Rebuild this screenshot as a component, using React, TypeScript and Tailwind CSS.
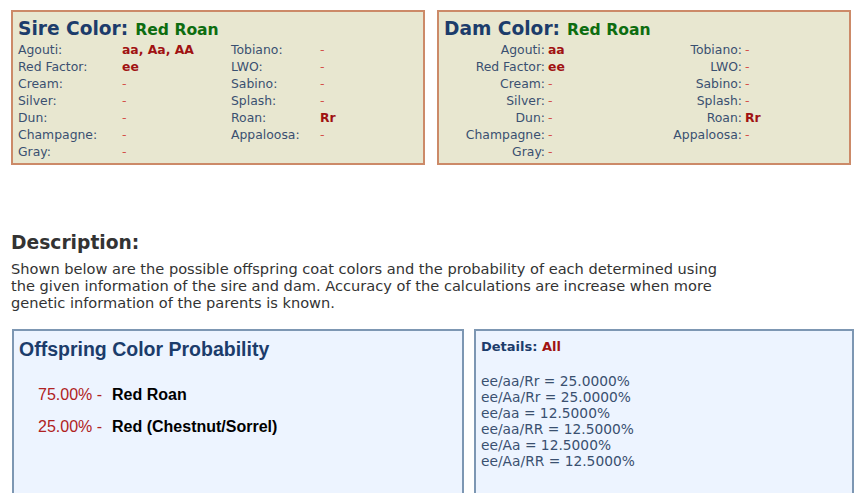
import React from 'react';

const VERDANA = "font-['DejaVu_Sans',Verdana,sans-serif]";
const ARIAL = "font-['Liberation_Sans',Arial,sans-serif]";

type Gene = [string, string];

const left: Gene[] = [
  ['Agouti:', 'aa, Aa, AA'],
  ['Red Factor:', 'ee'],
  ['Cream:', '-'],
  ['Silver:', '-'],
  ['Dun:', '-'],
  ['Champagne:', '-'],
  ['Gray:', '-'],
];
const right: Gene[] = [
  ['Tobiano:', '-'],
  ['LWO:', '-'],
  ['Sabino:', '-'],
  ['Splash:', '-'],
  ['Roan:', 'Rr'],
  ['Appaloosa:', '-'],
];
const damLeft: Gene[] = left.map(([k, v]) => [k, k === 'Agouti:' ? 'aa' : v]);

function Value({ v }: { v: string }) {
  if (v === '-') return <span className="text-[#d4504a]">-</span>;
  return <span className="font-bold text-[#a01212]">{v}</span>;
}

function ParentBox({ title, genes, alignRight }: { title: string; genes: Gene[]; alignRight?: boolean }) {
  const rows = genes.map((g, i) => [g, right[i]] as const);
  return (
    <div className={`w-[414px] h-[155px] border-2 border-[#cc8a68] bg-[#e8e7d0] px-[5px] pt-[6px] ${VERDANA}`}>
      <div className="flex items-baseline gap-[7px] leading-[22px]">
        <span className="text-[18.6px] font-bold text-[#1c3c6b]">{title}</span>
        <span className="text-[15.6px] font-bold text-[#0d6d10]">Red Roan</span>
      </div>
      <div className="text-[12.4px] leading-[17px] text-[#3a5070]">
        {rows.map(([a, b], i) =>
          alignRight ? (
            <div key={i} className="flex">
              <div className="w-[101px] text-right">{a[0]}</div>
              <div className="w-[96px] pl-[3px]"><Value v={a[1]} /></div>
              <div className="w-[101px] text-right">{b ? b[0] : ''}</div>
              <div className="pl-[3px]">{b ? <Value v={b[1]} /> : null}</div>
            </div>
          ) : (
            <div key={i} className="flex">
              <div className="w-[104px]">{a[0]}</div>
              <div className="w-[109px]"><Value v={a[1]} /></div>
              <div className="w-[89px]">{b ? b[0] : ''}</div>
              <div>{b ? <Value v={b[1]} /> : null}</div>
            </div>
          )
        )}
      </div>
    </div>
  );
}

const details = [
  'ee/aa/Rr = 25.0000%',
  'ee/Aa/Rr = 25.0000%',
  'ee/aa = 12.5000%',
  'ee/aa/RR = 12.5000%',
  'ee/Aa = 12.5000%',
  'ee/Aa/RR = 12.5000%',
];

export default function App() {
  return (
    <div className="w-[864px] h-[493px] overflow-hidden bg-white">
      <div className="flex gap-[12px] pl-[11px] pt-[10px]">
        <ParentBox title="Sire Color:" genes={left} />
        <ParentBox title="Dam Color:" genes={damLeft} alignRight />
      </div>

      <div className={`pl-[11px] pt-[64px] text-[#333333] ${VERDANA}`}>
        <h2 className="text-[18.7px] font-bold leading-[28px]">Description:</h2>
        <p className="pt-[3px] text-[14.6px] leading-[17px] whitespace-nowrap">
          Shown below are the possible offspring coat colors and the probability of each determined using
          <br />
          the given information of the sire and dam. Accuracy of the calculations are increase when more
          <br />
          genetic information of the parents is known.
        </p>
      </div>

      <div className="flex gap-[10px] pl-[12px] pt-[18px]">
        <div className="w-[452px] h-[180px] border-2 border-[#7d97b3] bg-[#edf4ff] px-[5px] pt-[6px]">
          <div className={`${ARIAL} text-[19.5px] font-bold leading-[24px] text-[#1c3c6b]`}>Offspring Color Probability</div>
          <div className={`${ARIAL} text-[16px] pl-[19px] pt-[18px] leading-[32px]`}>
            <div className="flex">
              <span className="w-[74px] text-[#b02222]">75.00% -</span>
              <span className="font-bold text-black">Red Roan</span>
            </div>
            <div className="flex">
              <span className="w-[74px] text-[#b02222]">25.00% -</span>
              <span className="font-bold text-black">Red (Chestnut/Sorrel)</span>
            </div>
          </div>
        </div>
        <div className={`w-[380px] h-[180px] border-2 border-[#7d97b3] bg-[#edf4ff] px-[5px] pt-[7px] ${VERDANA}`}>
          <div className="text-[13px] font-bold leading-[17px] text-[#1c3c6b]">
            Details: <span className="text-[#a01212]">All</span>
          </div>
          <div className="pt-[18px] text-[13.8px] leading-[16px] text-[#3a5070]">
            {details.map((d) => (
              <div key={d}>{d}</div>
            ))}
          </div>
        </div>
      </div>
    </div>
  );
}
